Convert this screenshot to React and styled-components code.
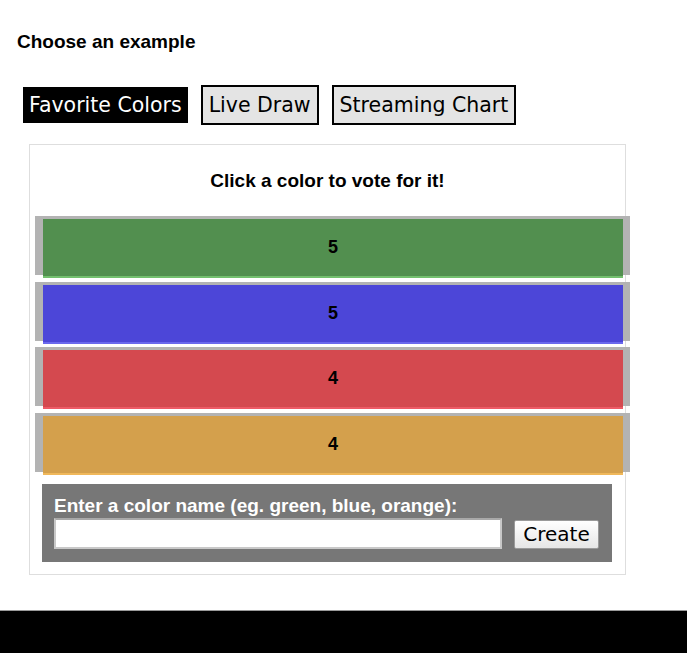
import React, { useState } from 'react';
import styled, { createGlobalStyle } from 'styled-components';

const GlobalStyle = createGlobalStyle`
  html, body {
    margin: 0;
    padding: 0;
    background: #fff;
    font-family: "Liberation Sans", Arial, sans-serif;
  }
`;

const Page = styled.div`
  width: 687px;
  height: 653px;
  display: flex;
  flex-direction: column;
  overflow: hidden;
`;

const Main = styled.div`
  padding: 31px 0 0 17px;
  height: 610px;
  flex: none;
  box-sizing: border-box;
`;

const Heading = styled.h1`
  margin: 0;
  font-size: 19px;
  font-weight: bold;
  line-height: 21px;
  color: #000;
`;

const Tabs = styled.div`
  display: flex;
  align-items: center;
  gap: 13px;
  margin: 33px 0 0 6px;
  height: 40px;
`;

const Tab = styled.button`
  font-family: "DejaVu Sans", "Lucida Grande", sans-serif;
  font-size: 20.5px;
  height: ${(p) => (p.$active ? '36px' : '40px')};
  line-height: 34px;
  padding: 0 6px;
  margin: 0;
  background: ${(p) => (p.$active ? '#000' : '#e4e4e4')};
  color: ${(p) => (p.$active ? '#fff' : '#000')};
  border: ${(p) => (p.$active ? 'none' : '2px solid #000')};
  cursor: pointer;
  box-sizing: border-box;
`;

const Panel = styled.div`
  margin: 19px 0 0 12px;
  width: 597px;
  box-sizing: border-box;
  border: 1px solid #dedede;
  padding: 0 0 12px;
`;

const Title = styled.h2`
  margin: 0;
  padding: 25px 0 0;
  height: 71px;
  box-sizing: border-box;
  text-align: center;
  font-size: 19px;
  font-weight: bold;
  line-height: 21px;
`;

const Track = styled.div`
  margin: 0 0 6.67px 5px;
  width: 595px;
  height: 59px;
  background: #b3b3b3;
  cursor: pointer;
`;

const Bar = styled.div`
  margin-left: 8px;
  position: relative;
  top: 3px;
  width: 580px;
  height: 59px;
  box-sizing: border-box;
  background: ${(p) => p.$color};
  border-bottom: 2px solid ${(p) => p.$edge};
  display: flex;
  align-items: center;
  justify-content: center;
  font-size: 18px;
  font-weight: bold;
  color: #000;
`;

const Form = styled.form`
  margin: 12px 0 0 12px;
  width: 570px;
  height: 78px;
  box-sizing: border-box;
  background: #777;
  padding: 11px 12px 0;
`;

const Label = styled.label`
  display: block;
  color: #fff;
  font-size: 19px;
  font-weight: bold;
  line-height: 21px;
`;

const Row = styled.div`
  display: flex;
  align-items: flex-start;
  gap: 12px;
  margin-top: 2px;
`;

const Input = styled.input`
  width: 448px;
  height: 31px;
  box-sizing: border-box;
  border: 2px solid #c8c8c8;
  border-top-color: #a9a9a9;
  background: #fff;
  outline: none;
  font-size: 16px;
`;

const CreateButton = styled.button`
  width: 85px;
  height: 29px;
  margin-top: 2px;
  box-sizing: border-box;
  border: 1px solid #9a9a9a;
  border-radius: 2px;
  background: linear-gradient(#ffffff, #e6e6e6);
  font-family: "DejaVu Sans", "Lucida Grande", sans-serif;
  font-size: 20px;
  line-height: 27px;
  padding: 0;
  color: #000;
  cursor: pointer;
`;

const Footer = styled.div`
  flex: 1;
  background: #000;
  border-top: 1px solid #9a9a9a;
`;

const colors = [
  { name: 'green', color: '#528f4f', edge: '#73c06e', votes: 5 },
  { name: 'blue', color: '#4c46d8', edge: '#6a68ee', votes: 5 },
  { name: 'red', color: '#d4494f', edge: '#ee5a66', votes: 4 },
  { name: 'orange', color: '#d4a04c', edge: '#f0b85a', votes: 4 },
];

const App = () => {
  const [items, setItems] = useState(colors);
  const [name, setName] = useState('');

  const vote = (i) => {
    setItems(items.map((c, j) => (j === i ? { ...c, votes: c.votes + 1 } : c)));
  };

  const handleSubmit = (e) => {
    e.preventDefault();
    if (!name) return;
    setItems([...items, { name, color: name, edge: name, votes: 0 }]);
    setName('');
  };

  return (
    <Page>
      <GlobalStyle />
      <Main>
        <Heading>Choose an example</Heading>
        <Tabs>
          <Tab $active>Favorite Colors</Tab>
          <Tab>Live Draw</Tab>
          <Tab>Streaming Chart</Tab>
        </Tabs>
        <Panel>
          <Title>Click a color to vote for it!</Title>
          {items.map((c, i) => (
            <Track key={c.name} onClick={() => vote(i)}>
              <Bar $color={c.color} $edge={c.edge}>{c.votes}</Bar>
            </Track>
          ))}
          <Form onSubmit={handleSubmit}>
            <Label htmlFor="color">Enter a color name (eg. green, blue, orange):</Label>
            <Row>
              <Input id="color" value={name} onChange={(e) => setName(e.target.value)} />
              <CreateButton type="submit">Create</CreateButton>
            </Row>
          </Form>
        </Panel>
      </Main>
      <Footer />
    </Page>
  );
};

export default App;
